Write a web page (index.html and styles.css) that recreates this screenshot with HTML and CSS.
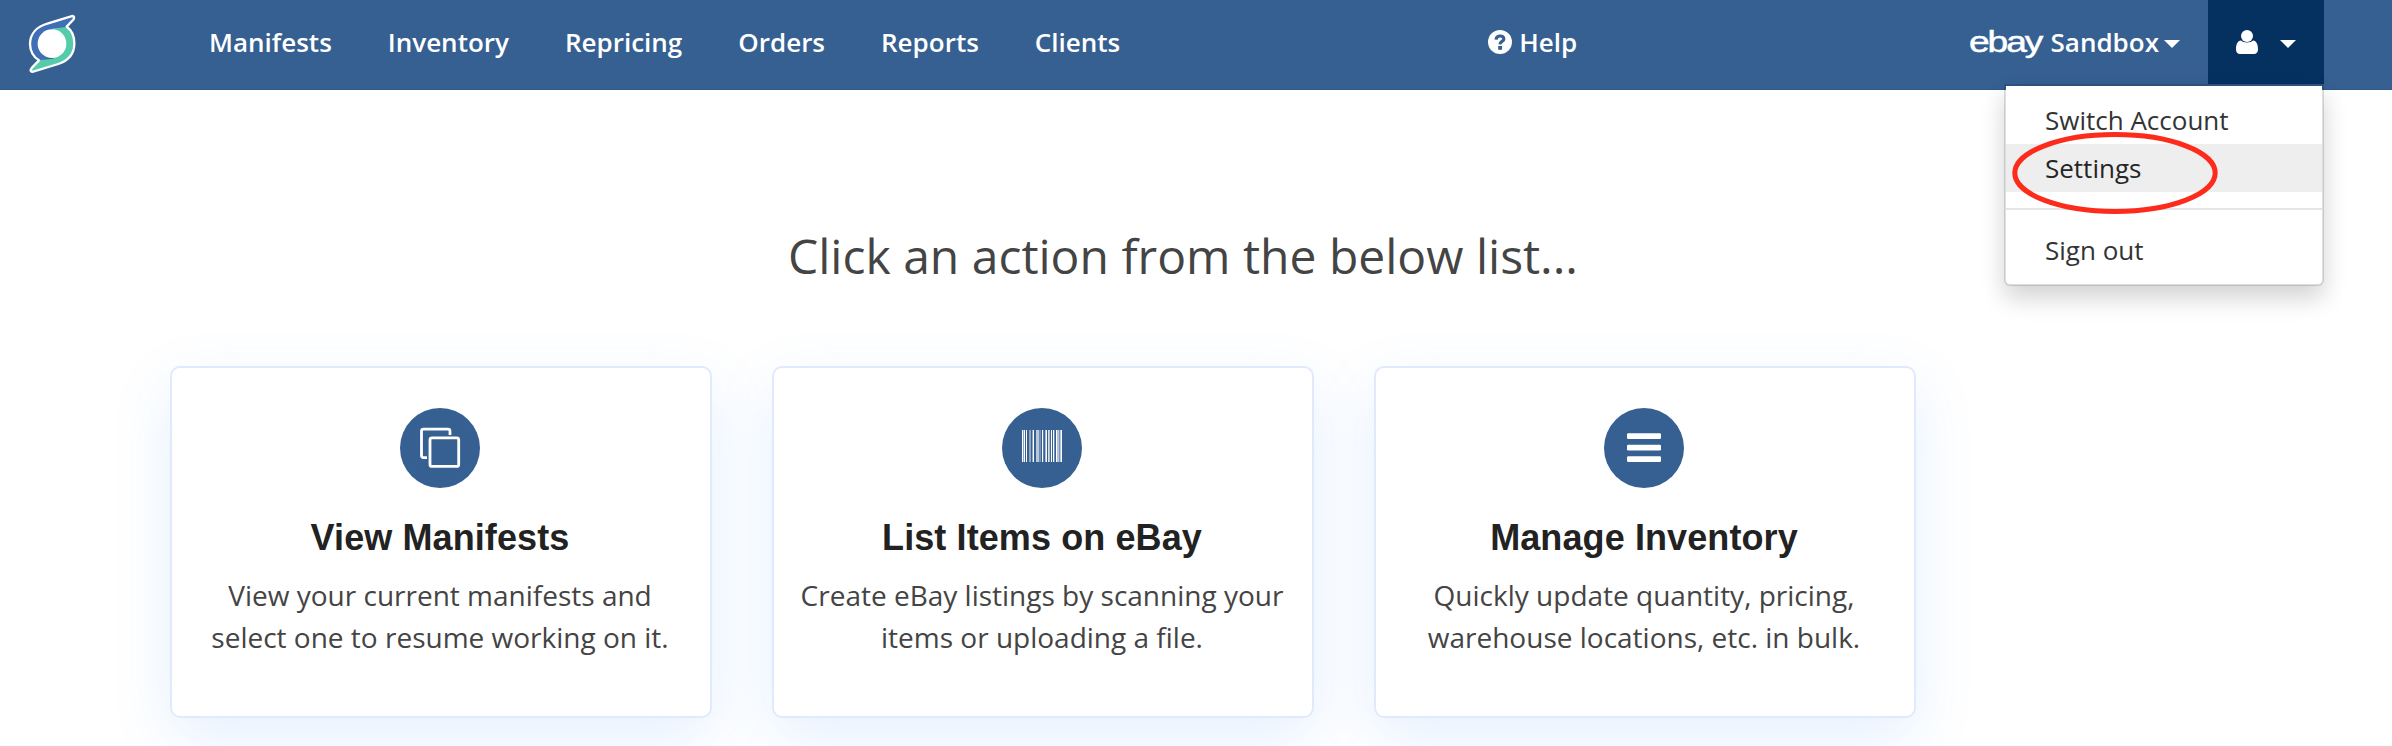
FILE: index.html
```html
<!DOCTYPE html>
<html lang="en">
<head>
<meta charset="utf-8">
<title>Actions</title>
<link rel="stylesheet" href="styles.css">
</head>
<body>
<header class="navbar">
  <svg class="logo" viewBox="0 0 270 270">
    <path class="logo-blue" d="M184 50L112 72C82 80 62 102 62 132C62 154 72 172 88 181L126 172L168 84L188 60C194 52 190 47 184 50Z"/>
    <path class="logo-green" d="M126 86C150 82 166 82 172 80C184 92 190 108 190 130C190 166 168 184 146 191L70 214C60 216 60 208 64 203L88 180L130 176Z"/>
    <path class="logo-line" d="M183 49L112 71C80 80 60 102 60 132C60 152 70 172 87 181L66 203C57 213 65 217 72 214L145 192C176 182 193 164 193 130C193 108 186 91 170 80L189 60C196 51 190 46 183 49Z"/>
    <circle cx="126" cy="131" r="43" fill="#fff"/>
  </svg>
  <nav class="menu">
    <a>Manifests</a><a>Inventory</a><a>Repricing</a><a>Orders</a><a>Reports</a><a>Clients</a>
  </nav>
  <a class="help">
    <svg class="help-icon" viewBox="0 0 24 24"><circle cx="12" cy="12" r="12" fill="#fff"/><path d="M8 9.6C8.6 4.8 16.4 5 15.8 9.2C15.5 11.6 12.1 11.4 12 14.4" fill="none" stroke="#365f92" stroke-width="3.2"/><path d="M10.2 16h3.8v3.8h-3.8z" fill="#365f92"/></svg>
    <span>Help</span>
  </a>
  <a class="store"><span class="ebay">ebay</span><span class="store-name">Sandbox</span><i class="caret"></i></a>
  <div class="account">
    <svg class="user-icon" viewBox="0 0 22 24"><circle cx="11" cy="6" r="6" fill="#fff"/><path d="M5 10.6C6.8 13.2 15.2 13.2 17 10.6C20.6 11 22 14.5 22 19.4C22 22.2 20.4 24 18 24H4C1.6 24 0 22.2 0 19.4C0 14.5 1.4 11 5 10.6Z" fill="#fff"/></svg>
    <i class="caret"></i>
    <div class="dropdown">
      <a class="item">Switch Account</a>
      <a class="item active">Settings</a>
      <div class="divider"></div>
      <a class="item">Sign out</a>
      <svg class="marker" viewBox="0 0 206 82"><ellipse cx="103" cy="41" rx="100.2" ry="38.4"/></svg>
    </div>
  </div>
</header>
<main class="content">
  <h1 class="heading">Click an action from the below list...</h1>
  <div class="cards">
    <section class="card">
      <svg class="badge" viewBox="0 0 80 80"><circle cx="40" cy="40" r="40"/><g fill="none" stroke="#fff" stroke-width="2.8"><rect x="30" y="29.8" width="28.7" height="28.6" rx="2"/><path d="M50 27V23.2Q50 21.2 48 21.2H23.5Q21.5 21.2 21.5 23.2V47.6Q21.5 49.6 23.5 49.6H27"/></g></svg>
      <h2>View Manifests</h2>
      <p>View your current manifests and<br>select one to resume working on it.</p>
    </section>
    <section class="card">
      <svg class="badge" viewBox="0 0 80 80"><circle cx="40" cy="40" r="40"/><path fill="#fff" d="M20 22h1.4v32H20zM22 22h1v32h-1zM24 22h1v32h-1z"/><path fill="#8ca6c4" d="M27 22h2v32h-2zM30 22h1v32h-1zM21.4 22h.6v32h-.6z"/><path fill="#fff" d="M31 22h1v32h-1zM40 22h1.2v32H40zM43.4 22h1.6v32h-1.6zM46.2 22h1.2v32h-1.2zM49 22h1v32h-1zM51 22h1.3v32H51zM54 22h1.6v32H54zM59 22h1v32h-1z"/><path fill="#b8c8dc" d="M34 22h3v32h-3zM37.6 22h.9v32h-.9zM47.4 22h.7v32h-.7zM55.6 22h1.8v32h-1.8zM57.9 22h1.1v32h-1.1z"/></svg>
      <h2>List Items on eBay</h2>
      <p>Create eBay listings by scanning your<br>items or uploading a file.</p>
    </section>
    <section class="card">
      <svg class="badge" viewBox="0 0 80 80"><circle cx="40" cy="40" r="40"/><g fill="#fff"><rect x="23" y="25.2" width="34" height="5.8" rx="1.3"/><rect x="23" y="36.8" width="34" height="5.8" rx="1.3"/><rect x="23" y="48.2" width="34" height="5.8" rx="1.3"/></g></svg>
      <h2>Manage Inventory</h2>
      <p>Quickly update quantity, pricing,<br>warehouse locations, etc. in bulk.</p>
    </section>
  </div>
</main>
</body>
</html>
```
FILE: styles.css
```css
* { box-sizing: border-box; }
body { margin: 0; height: 746px; overflow: hidden; background: #fff; font-family: "Open Sans", sans-serif; color: #444; }
.navbar { display: flex; height: 90px; background: #365f92; color: #fff; font-size: 26px; font-weight: 600; line-height: 84px; padding-right: 68px; border-bottom: 1px solid #315a8d; }
.logo { width: 90px; height: 90px; margin-left: 10px; flex: none; }
.logo-blue { fill: #3f70b5; }
.logo-green { fill: #56cbaa; }
.logo-line { fill: none; stroke: #fff; stroke-width: 7; stroke-linejoin: round; }
.menu { display: flex; gap: 56px; margin-left: 109px; }
.help { display: flex; margin-left: 368px; gap: 7px; }
.help-icon { width: 24px; height: 24px; margin-top: 30px; }
.store { display: flex; margin-left: auto; margin-right: 28px; }
.ebay { font: 400 29px/84px "Liberation Sans", sans-serif; width: 82px; transform: scaleX(1.28); transform-origin: 0 50%; letter-spacing: -1.6px; -webkit-text-stroke: .5px #fff; }
.caret { width: 16px; height: 8px; margin: 40px 0 0 5px; background: #fff; clip-path: polygon(0 0, 100% 0, 50% 100%); }
.account { position: relative; display: flex; width: 116px; height: 84px; background: #043160; padding-left: 28px; }
.user-icon { width: 22px; height: 24px; margin-top: 30px; }
.account .caret { margin-left: 22px; }
.dropdown { position: absolute; right: 0; top: 84px; width: 320px; height: 202px; background: #fff; background-clip: padding-box; border: 2px solid rgba(0,0,0,.13); border-radius: 0 0 6px 6px; box-shadow: 0 12px 24px rgba(0,0,0,.175); padding-top: 10px; color: #333; font-weight: 400; }
.item { display: block; height: 48px; line-height: 48px; padding-left: 39px; }
.item.active { background: #eee; color: #262626; }
.divider { height: 2px; background: #e5e5e5; margin: 16px 0; }
.marker { position: absolute; left: 6px; top: 46px; width: 206px; height: 82px; fill: none; stroke: #fd2b1b; stroke-width: 5; }
.heading { margin: 0 0 0 788px; padding-top: 130px; font-size: 48px; font-weight: 400; line-height: 72px; white-space: nowrap; height: 276px; }
.cards { display: flex; gap: 60px; padding-left: 170px; }
.card { width: 542px; height: 352px; border: 2px solid #e1eafc; border-radius: 10px; background: #fff; box-shadow: 0 20px 60px rgba(51,136,255,.13); padding: 40px 2px 0 0; text-align: center; }
.badge { display: block; width: 80px; height: 80px; margin: 0 auto; fill: #365f92; }
h2 { margin: 28px 0 0; font: 700 36px/44px "Liberation Sans", sans-serif; letter-spacing: .1px; color: #222; }
p { margin: 14px 0 0; font-size: 28px; line-height: 42px; white-space: nowrap; }
```
